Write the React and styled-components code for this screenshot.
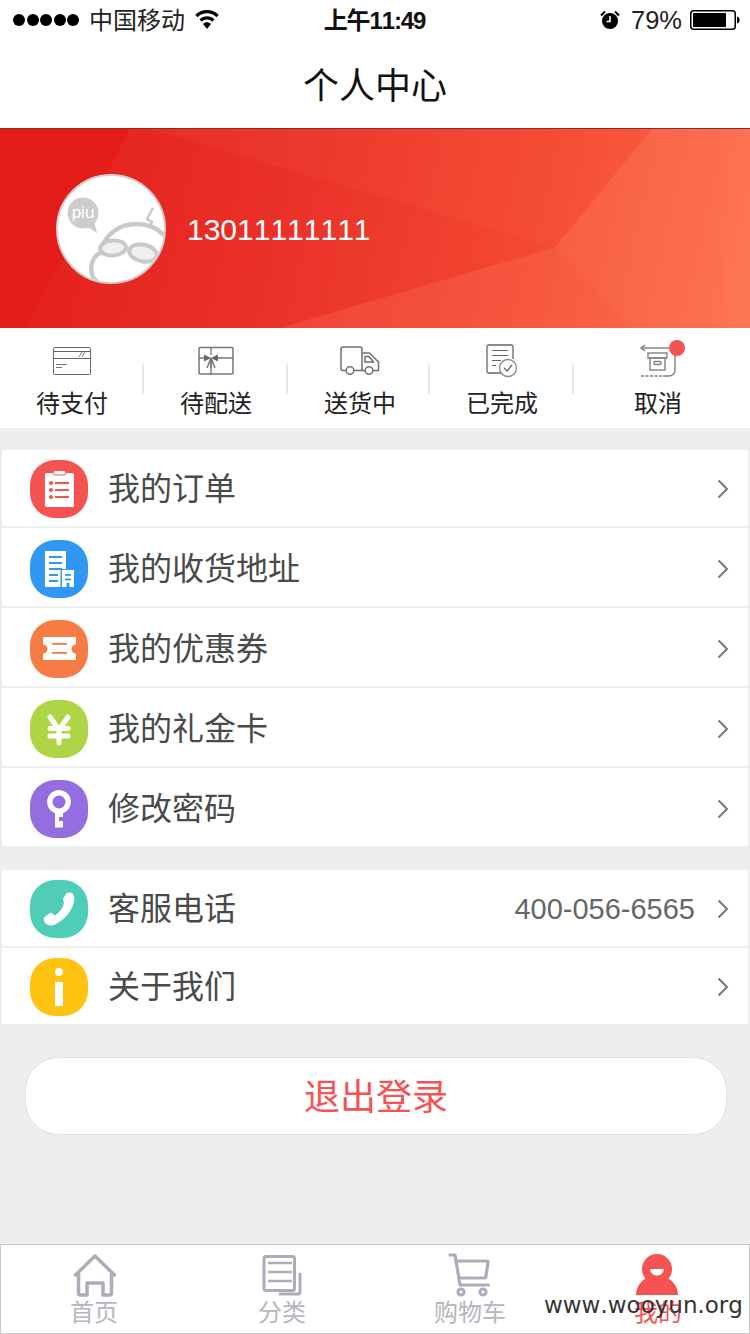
import React from "react";
import styled, { createGlobalStyle } from "styled-components";

const Global = createGlobalStyle`
  html, body { margin: 0; padding: 0; background: #eeeeee; }
  * { box-sizing: border-box; }
`;

const FONT = `"Liberation Sans", "Noto Sans CJK SC", sans-serif`;

const Page = styled.div`
  position: relative;
  width: 750px;
  height: 1334px;
  display: flex;
  flex-direction: column;
  background: #eeeeee;
  font-family: ${FONT};
  font-kerning: none;
  overflow: hidden;
`;

const StatusBar = styled.div`
  height: 40px;
  background: #fff;
  display: grid;
  grid-template-columns: 1fr auto 1fr;
  align-items: center;
  padding: 0 10px 0 13px;
  color: #000;
`;
const StatusSide = styled.div`
  display: flex;
  align-items: center;
  justify-content: ${(p) => (p.$end ? "flex-end" : "flex-start")};
  font-size: 24px;
`;
const Dots = styled.div`
  display: flex;
  gap: 1.5px;
  margin-right: 10px;
`;
const Dot = styled.i`
  width: 12px;
  height: 12px;
  border-radius: 50%;
  background: #000;
`;
const Carrier = styled.span`
  margin-right: 10px;
  padding-bottom: 3px;
  color: #222;
`;
const Clock = styled.div`
  font-size: 24px;
  font-weight: 700;
  letter-spacing: -1.1px;
  padding-bottom: 3px;
  margin-left: -4px;
  color: #111;
`;
const Percent = styled.span`
  margin: 0 8px 0 11px;
  font-size: 25.5px;
  color: #222;
`;

const NavBar = styled.header`
  height: 88px;
  background: #fff;
  display: flex;
  align-items: center;
  justify-content: center;
  font-size: 36px;
  color: #111;
  padding-bottom: 2px;
`;

const Banner = styled.section`
  position: relative;
  height: 200px;
  display: flex;
  align-items: center;
  padding-left: 56px;
  border-top: 1px solid #8e2a22;
`;
const BannerArt = styled.svg`
  position: absolute;
  inset: 0;
  width: 100%;
  height: 100%;
`;
const Avatar = styled.div`
  position: relative;
  width: 110px;
  height: 110px;
  border-radius: 50%;
  border: 2px solid #cfcfcf;
  background: #fff;
  overflow: hidden;
`;
const Phone = styled.div`
  position: relative;
  margin-left: 21px;
  padding-top: 2px;
  font-size: 30px;
  color: #fff;
`;

const Orders = styled.nav`
  height: 100px;
  background: #fff;
  display: grid;
  grid-template-columns: 144px 144px 142px 144px 1fr;
`;
const OrderItem = styled.div`
  position: relative;
  display: flex;
  flex-direction: column;
  align-items: center;
  padding: 16px ${(p) => p.$inset || 0}px 0 ${(p) => p.$lead || 0}px;
  &:not(:last-child)::after {
    content: "";
    position: absolute;
    right: 0;
    top: 36px;
    height: 30px;
    width: 2px;
    background: #e8e8e8;
  }
`;
const OrderIcon = styled.div`
  position: relative;
  height: 34px;
  display: flex;
  align-items: center;
  justify-content: center;
`;
const Badge = styled.i`
  position: absolute;
  top: -4px;
  right: -8px;
  width: 16px;
  height: 16px;
  border-radius: 50%;
  background: #f55252;
`;
const OrderLabel = styled.span`
  margin-top: 8px;
  font-size: 24px;
  line-height: 36px;
  color: #222;
`;

const Group = styled.ul`
  list-style: none;
  margin: ${(p) => p.$top}px 2px 0;
  padding: 0;
  display: flex;
  flex-direction: column;
  gap: 2px;
`;
const Row = styled.li`
  display: flex;
  align-items: center;
  background: #fff;
  padding: ${(p) => (p.$tight ? 10 : 12)}px 19px 8px 28px;
`;
const RowIcon = styled.span`
  flex: none;
  width: 58px;
  height: 58px;
  border-radius: 25px;
  background: ${(p) => p.$color};
  display: block;
`;
const RowLabel = styled.span`
  margin-left: 20px;
  padding-bottom: 6px;
  flex: 1;
  font-size: 32px;
  color: #4a4a4a;
`;
const RowValue = styled.span`
  font-size: 29px;
  color: #666;
  margin-right: 22px;
`;

const Logout = styled.button`
  display: block;
  width: 702px;
  height: 78px;
  margin: 33px 0 0 25px;
  padding: 0 0 4px;
  border: 1px solid #e2e2e2;
  border-radius: 34px;
  background: #fff;
  font-family: ${FONT};
  font-size: 36px;
  color: #f55252;
`;

const TabBar = styled.footer`
  margin-top: auto;
  height: 90px;
  background: #fff;
  box-shadow: inset 0 0 0 1px #c8c8c8;
  display: grid;
  grid-template-columns: repeat(4, 188px);
`;
const Tab = styled.div`
  display: flex;
  flex-direction: column;
  align-items: center;
  padding-top: 9px;
  color: ${(p) => (p.$active ? "#f55252" : "#b4b6c0")};
`;
const TabLabel = styled.span`
  font-size: 24px;
  line-height: 30px;
  margin-top: 1px;
`;
const Watermark = styled.div`
  position: absolute;
  left: 544px;
  top: 1291px;
  font-family: "DejaVu Sans", sans-serif;
  font-size: 23px;
  line-height: 28px;
  color: #333;
`;

const Chevron = () => (
  <svg width="12" height="20" viewBox="0 0 12 20" fill="none" stroke="#777" strokeWidth="2">
    <path d="M1.5 1.5 10 10l-8.5 8.5" />
  </svg>
);

const Wifi = () => (
  <svg width="24" height="20" viewBox="0 0 24 20" fill="#000">
    <path d="M12 0C7.4 0 3.4 1.8.3 4.8l2.2 2.4C5 4.8 8.3 3.2 12 3.2s7 1.6 9.5 4l2.2-2.4C20.6 1.8 16.6 0 12 0z" />
    <path d="M12 6.3c-2.9 0-5.5 1.2-7.5 3l2.2 2.4c1.4-1.3 3.3-2.2 5.3-2.2s3.9.9 5.3 2.2l2.2-2.4c-2-1.8-4.6-3-7.5-3z" />
    <path d="M12 12.3c-1.5 0-2.9.6-3.9 1.6L12 19l3.9-5.1c-1-1-2.4-1.6-3.9-1.6z" />
  </svg>
);

const Alarm = () => (
  <svg width="20" height="20" viewBox="0 0 20 20">
    <circle cx="10" cy="11" r="8" fill="#000" />
    <path d="M10 6v5.500H6.500" fill="none" stroke="#fff" strokeWidth="1.600" />
    <path d="M1 5.500 5 1.500M19 5.500 15 1.500" stroke="#000" strokeWidth="2" />
  </svg>
);

const Battery = () => (
  <svg width="50" height="20" viewBox="0 0 50 20">
    <rect x=".75" y=".75" width="44.500" height="18.500" rx="3" fill="#fff" stroke="#000" strokeWidth="1.500" />
    <rect x="3" y="3" width="33" height="14" fill="#000" />
    <path d="M47 6.500c1.700.3 2.600 1.700 2.600 3.500s-.9 3.200-2.600 3.500z" fill="#000" />
  </svg>
);

const BannerBackdrop = () => (
  <BannerArt viewBox="0 0 750 200" preserveAspectRatio="none">
    <defs>
      <linearGradient id="heroFill" x1="0" y1="0" x2="750" y2="170" gradientUnits="userSpaceOnUse">
        <stop offset="0" stopColor="#e31d1a" />
        <stop offset="0.4" stopColor="#ea3229" />
        <stop offset="0.72" stopColor="#f44a33" />
        <stop offset="1" stopColor="#fd6a4c" />
      </linearGradient>
    </defs>
    <rect width="750" height="200" fill="url(#heroFill)" />
    <polygon points="0,0 130,0 25,200 0,200" fill="#e41d1a" />
    <polygon points="150,0 652,0 555,119" fill="#ff6a4c" fillOpacity="0.12" />
    <polygon points="280,200 555,119 635,200" fill="#ff8a6a" fillOpacity="0.22" />
    <polygon points="652,0 750,0 750,200 635,200 555,119" fill="#ff8c68" fillOpacity="0.3" />
    <polygon points="725,0 750,0 750,200 722,200" fill="#ff8c68" fillOpacity="0.08" />
  </BannerArt>
);

const Doodle = () => (
  <svg width="106" height="106" viewBox="2 2 106 106">
    <circle cx="27" cy="39" r="15.500" fill="#cdcdcd" />
    <path d="M30 52 41 59 38 47z" fill="#cdcdcd" />
    <text x="27" y="44" textAnchor="middle" fontFamily="Liberation Sans, sans-serif" fontSize="17" fill="#fff">piu</text>
    <g fill="none" stroke="#c9c9c9" strokeWidth="4.500">
      <path d="M46 74C50 60 64 50 80 50c12 0 22 3 30 14" />
      <path d="M46 78C36 82 33 93 37 103c3 6 8 8 14 9" />
      <path d="M97 34 91 45l5 3-3 5" strokeWidth="2.500" />
    </g>
    <ellipse cx="57" cy="74" rx="13" ry="7.500" transform="rotate(-4 57 74)" fill="#f0f0f0" stroke="#c9c9c9" strokeWidth="4" />
    <ellipse cx="87" cy="79" rx="14" ry="8.500" transform="rotate(12 87 79)" fill="#f0f0f0" stroke="#c9c9c9" strokeWidth="4" />
  </svg>
);

const CardIcon = () => (
  <svg width="40" height="30" viewBox="0 0 40 30" fill="none" stroke="#666" strokeWidth="1">
    <rect x="1.500" y="1.500" width="37" height="27" rx="1" />
    <path d="M1.500 5.500h37M1.500 12.500h37" />
    <path d="M4 18.500h11M4 21.500h6M27 11l3-5M30 11l3-5" strokeWidth=".9" />
  </svg>
);

const GiftIcon = () => (
  <svg width="36" height="30" viewBox="0 0 36 30" fill="none" stroke="#777" strokeWidth="1.500">
    <rect x="1" y="1.500" width="34" height="26.500" rx="1" />
    <path d="M13 1.500V9M13 15v13M1 12h6M20 12h15" strokeWidth="1.300" />
    <path d="M13 12 6 8.500v7zM13 12l7-3.500v7z" fill="#666" stroke="none" />
    <path d="M13 12 9 22M13 12l4 10M13 12v10" strokeWidth="1.500" />
  </svg>
);

const TruckIcon = () => (
  <svg width="40" height="30" viewBox="0 0 40 30" fill="none" stroke="#707070" strokeWidth="1.500" strokeLinejoin="round">
    <path d="M6 24.500H3a2 2 0 0 1-2-2V3a2 2 0 0 1 2-2h17a2 2 0 0 1 2 2v21.500h-8" />
    <path d="M22 7h7.500l9 9v8.500H33M25 24.500h-3" />
    <path d="M25 10.500h4l4.500 5.500H25z" />
    <circle cx="10" cy="24.500" r="3.800" />
    <circle cx="29" cy="24.500" r="3.800" />
  </svg>
);

const DocIcon = () => (
  <svg width="32" height="34" viewBox="0 0 32 34" fill="none" stroke="#666" strokeWidth="1.300">
    <path d="M20 29H2.500A1.500 1.500 0 0 1 1 27.500v-25A1.500 1.500 0 0 1 2.500 1h23A1.500 1.500 0 0 1 27 2.500V15" />
    <path d="M6 6.500h16M6 11.500h16M6 16.500h9M6 21.500h4" strokeWidth="1.200" />
    <circle cx="22" cy="24" r="8.500" fill="#fff" stroke="#888" />
    <path d="m18 24 3 3 5-6" />
  </svg>
);

const ArchiveIcon = () => (
  <svg width="38" height="34" viewBox="0 0 38 34" fill="none" stroke="#808080" strokeWidth="1.400">
    <path d="M2 4h28" />
    <path d="M6 1 2 4l4 3" />
    <path d="M36 10v16a6 6 0 0 1-6 6h-6" />
    <path d="M2 32h22" strokeDasharray="3 1.500" />
    <rect x="9" y="9" width="19" height="5" />
    <rect x="11" y="14" width="15" height="12" />
    <rect x="15" y="17.500" width="7" height="3" rx="1" />
  </svg>
);

const ClipIcon = () => (
  <svg width="58" height="58" viewBox="0 0 58 58">
    <rect x="15" y="13" width="29" height="34" rx="1.500" fill="#fff" />
    <rect x="23" y="10.500" width="13" height="4.500" rx="2.200" fill="#fff" stroke="#f55252" strokeWidth="1" />
    <g fill="#f55252">
      <circle cx="21" cy="23" r="2.100" />
      <circle cx="21" cy="30" r="2.100" />
      <circle cx="21" cy="37" r="2.100" />
      <rect x="25" y="22" width="14" height="2" />
      <rect x="25" y="29" width="14" height="2" />
      <rect x="25" y="36" width="14" height="2" />
    </g>
  </svg>
);

const BuildingIcon = () => (
  <svg width="58" height="58" viewBox="0 0 58 58">
    <rect x="15" y="11" width="21" height="36" fill="#fff" />
    <g fill="#3098f3">
      <rect x="19" y="16" width="13" height="2" />
      <rect x="19" y="22" width="13" height="2" />
      <rect x="19" y="28" width="13" height="2" />
      <rect x="19" y="34" width="9" height="2" />
      <rect x="19" y="40" width="9" height="2" />
      <rect x="30.500" y="29" width="14.500" height="18" />
    </g>
    <rect x="32" y="30" width="12" height="17" fill="#fff" />
    <g fill="#3098f3">
      <rect x="35" y="34" width="6" height="1.800" />
      <rect x="35" y="38.500" width="6" height="1.800" />
      <rect x="36.500" y="43" width="3" height="4" />
    </g>
  </svg>
);

const TicketIcon = () => (
  <svg width="58" height="58" viewBox="0 0 58 58">
    <path
      d="M13 17h33v7.500a4.500 4.500 0 0 0 0 9V40H13v-6.500a4.500 4.500 0 0 0 0-9z"
      fill="#fff"
    />
    <g fill="#f57d45">
      <rect x="22" y="23" width="15" height="1.800" />
      <rect x="22" y="32" width="15" height="1.800" />
    </g>
  </svg>
);

const YenIcon = () => (
  <svg width="58" height="58" viewBox="0 0 58 58" fill="none" stroke="#fff" strokeWidth="5" strokeLinecap="round">
    <path d="M20 17l9 13 9-13" />
    <path d="M29 30v13" />
    <path d="M20 28.500h18M20 36h18" />
  </svg>
);

const KeyIcon = () => (
  <svg width="58" height="58" viewBox="0 0 58 58">
    <path
      fillRule="evenodd"
      d="M29 10a12 12 0 0 1 4 23.300V37h-4v2h4v8.500h-8V33.300A12 12 0 0 1 29 10zm0 5.500a6.500 6.500 0 1 0 0 13 6.500 6.500 0 0 0 0-13z"
      fill="#fff"
    />
    <rect x="29" y="38" width="4" height="3" fill="#946de0" />
    <rect x="29" y="41" width="4" height="2" fill="#fff" />
  </svg>
);

const PhoneIcon = () => (
  <svg width="58" height="58" viewBox="0 0 58 58">
    <path
      d="M36 14c2-2 5-2 7 0l1 2c2 8-6 23-20 29-3 1-6 0-8-1l-2-3c-1-2 0-4 2-5l4-3c1-.5 2 0 3 1l2 1.500c5-3.500 8-7.500 9-12.500l-.5-2c-.5-1.500-.5-2.500.5-4z"
      fill="#fff"
    />
  </svg>
);

const InfoIcon = () => (
  <svg width="58" height="58" viewBox="0 0 58 58" fill="#fff">
    <circle cx="29" cy="14" r="4" />
    <rect x="25" y="24" width="8" height="24" />
  </svg>
);

const HomeIcon = () => (
  <svg width="44" height="44" viewBox="0 0 44 44" fill="none" stroke="#abadb8" strokeWidth="3.500" strokeLinejoin="round">
    <path d="M3.500 22 23 3l19.500 19" strokeLinecap="round" />
    <path d="M6.500 20v20a2 2 0 0 0 2 2H15V30h16v12h6.500a2 2 0 0 0 2-2V20" />
  </svg>
);

const ListIcon = () => (
  <svg width="40" height="44" viewBox="0 0 40 44" fill="none" stroke="#abadb8" strokeWidth="3">
    <rect x="2" y="3.500" width="30.500" height="34" rx="2" />
    <path d="M6 10h24M6 19h24M6 28h24" strokeWidth="2.500" />
    <path d="M38 21v18a2 2 0 0 1-2 2H18" strokeLinecap="round" />
  </svg>
);

const CartIcon = () => (
  <svg width="44" height="44" viewBox="0 0 44 44" fill="none" stroke="#abadb8" strokeWidth="3.200" strokeLinecap="round" strokeLinejoin="round">
    <path d="M2 2h5l5 30h28.500" />
    <path d="M8 8h31a1 1 0 0 1 1 1l-2 14a2 2 0 0 1-2 2H11" />
    <circle cx="13" cy="39" r="3" />
    <circle cx="35" cy="39" r="3" />
  </svg>
);

const PersonIcon = () => (
  <svg width="44" height="44" viewBox="1 0 44 44">
    <path d="M1 42c0-8 5-14 11-17.500h20C38 28 43 34 43 42z" fill="#f55252" />
    <circle cx="22" cy="16" r="15" fill="#f55252" />
    <path d="M15 16h14c-.5 4-3.300 6.500-7 6.500S15.500 20 15 16z" fill="#fff" />
  </svg>
);

const orders = [
  { label: "待支付", Icon: CardIcon },
  { label: "待配送", Icon: GiftIcon },
  { label: "送货中", Icon: TruckIcon, lead: 2 },
  { label: "已完成", Icon: DocIcon },
  { label: "取消", Icon: ArchiveIcon, badge: true, inset: 8 },
];

const accountRows = [
  { label: "我的订单", color: "#f55252", Icon: ClipIcon, tight: true },
  { label: "我的收货地址", color: "#3098f3", Icon: BuildingIcon },
  { label: "我的优惠券", color: "#f57d45", Icon: TicketIcon },
  { label: "我的礼金卡", color: "#add546", Icon: YenIcon },
  { label: "修改密码", color: "#946de0", Icon: KeyIcon },
];

const serviceRows = [
  { label: "客服电话", color: "#50cdb7", Icon: PhoneIcon, tight: true, value: "400-056-6565" },
  { label: "关于我们", color: "#ffc412", Icon: InfoIcon, tight: true },
];

const tabs = [
  { label: "首页", Icon: HomeIcon },
  { label: "分类", Icon: ListIcon },
  { label: "购物车", Icon: CartIcon },
  { label: "我的", Icon: PersonIcon, active: true },
];

const MenuRow = ({ label, color, Icon, tight, value }) => (
  <Row $tight={tight}>
    <RowIcon $color={color}>
      <Icon />
    </RowIcon>
    <RowLabel>{label}</RowLabel>
    {value && <RowValue>{value}</RowValue>}
    <Chevron />
  </Row>
);

export default function App() {
  return (
    <Page>
      <Global />
      <StatusBar>
        <StatusSide>
          <Dots>
            {[0, 1, 2, 3, 4].map((n) => (
              <Dot key={n} />
            ))}
          </Dots>
          <Carrier>中国移动</Carrier>
          <Wifi />
        </StatusSide>
        <Clock>上午11:49</Clock>
        <StatusSide $end>
          <Alarm />
          <Percent>79%</Percent>
          <Battery />
        </StatusSide>
      </StatusBar>
      <NavBar>个人中心</NavBar>
      <Banner>
        <BannerBackdrop />
        <Avatar>
          <Doodle />
        </Avatar>
        <Phone>13011111111</Phone>
      </Banner>
      <Orders>
        {orders.map(({ label, Icon, badge, lead, inset }) => (
          <OrderItem key={label} $lead={lead} $inset={inset}>
            <OrderIcon>
              <Icon />
              {badge && <Badge />}
            </OrderIcon>
            <OrderLabel>{label}</OrderLabel>
          </OrderItem>
        ))}
      </Orders>
      <Group $top={22}>
        {accountRows.map((row) => (
          <MenuRow key={row.label} {...row} />
        ))}
      </Group>
      <Group $top={24}>
        {serviceRows.map((row) => (
          <MenuRow key={row.label} {...row} />
        ))}
      </Group>
      <Logout>退出登录</Logout>
      <TabBar>
        {tabs.map(({ label, Icon, active }) => (
          <Tab key={label} $active={active}>
            <Icon />
            <TabLabel>{label}</TabLabel>
          </Tab>
        ))}
      </TabBar>
      <Watermark>www.wooyun.org</Watermark>
    </Page>
  );
}
